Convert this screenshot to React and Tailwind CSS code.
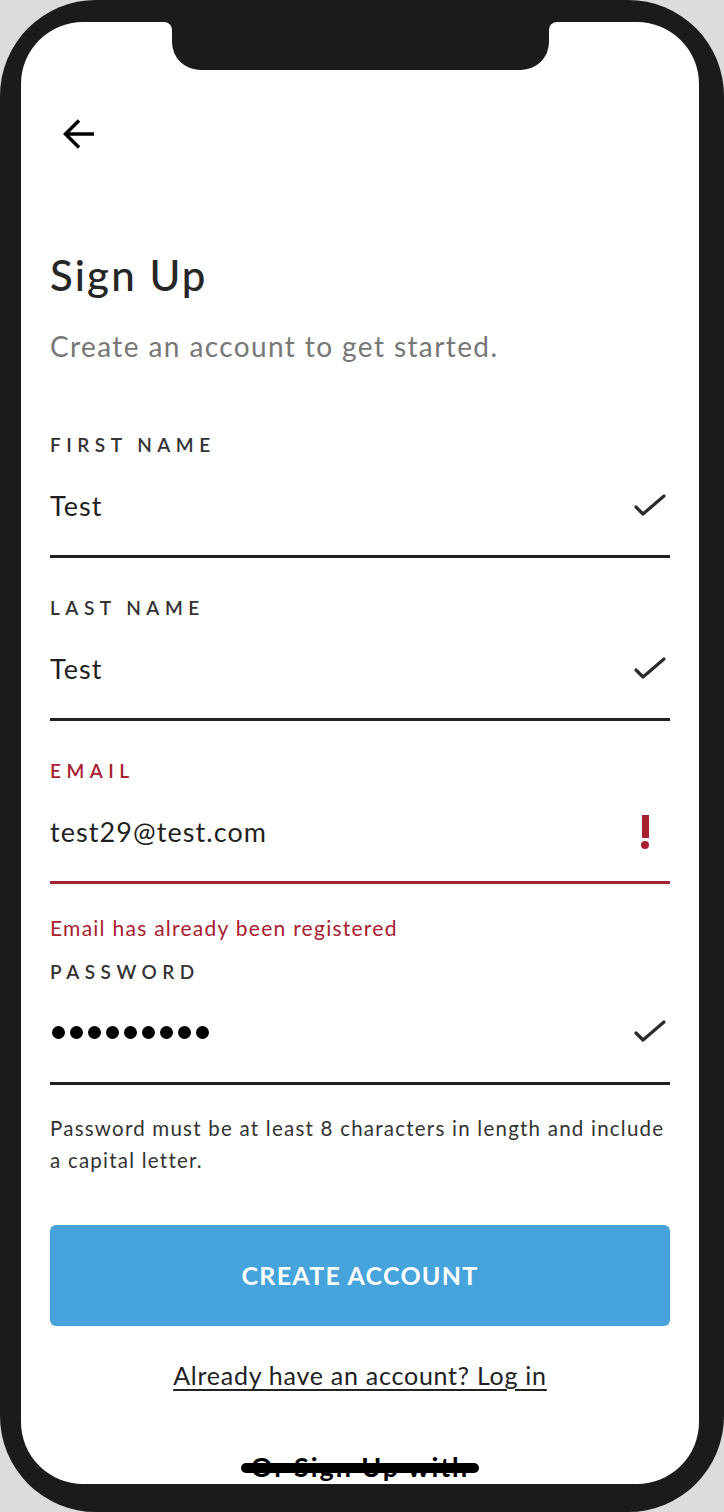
import React from 'react';

const font = { fontFamily: 'Lato, "Noto Sans", sans-serif' };

const Check = () => (
  <svg width="34" height="26" viewBox="0 0 34 26" fill="none">
    <polyline points="3,14 10,21 31,3" stroke="#2b2b2b" strokeWidth="3.2" strokeLinecap="round" strokeLinejoin="round" />
  </svg>
);

const Alert = () => (
  <div className="flex flex-col items-center w-[34px] mr-[5px]">
    <div className="w-[7px] h-[23px] bg-[#a8202f]" />
    <div className="w-[8px] h-[8px] rounded-full bg-[#a8202f] mt-[3px]" />
  </div>
);

const Field = ({ label, value, error, children, rowMt = 'mt-[25px]', lineMt = 'mt-[25px]' }) => (
  <div className="flex flex-col">
    <div className={`h-[24px] leading-[24px] text-[19px] font-semibold tracking-[0.29em] ${error ? 'text-[#a8202f]' : 'text-[#333]'}`}>
      {label}
    </div>
    <div className={`${rowMt} h-[48px] flex items-center justify-between`}>
      {children || <span className="text-[27px] tracking-[0.04em] text-[#1f1f1f]">{value}</span>}
      <div className="mr-[3px]">{error ? <Alert /> : <Check />}</div>
    </div>
    <div className={`${lineMt} h-[3px] ${error ? 'bg-[#a8202f]' : 'bg-[#222]'}`} />
  </div>
);

export default function App() {
  return (
    <div className="w-[724px] h-[1512px] bg-[#dcdcdc] overflow-hidden" style={font}>
      <div className="w-[724px] h-[1512px] bg-[#1b1b1b] rounded-[96px] pt-[22px] pl-[21px] pr-[25px]">
        <div className="relative h-[1462px] bg-white rounded-[62px] overflow-hidden">
          {/* notch */}
          <div className="absolute left-[143px] top-0 w-[8px] h-[8px] bg-[#1b1b1b]">
            <div className="w-full h-full bg-white rounded-tr-[8px]" />
          </div>
          <div className="absolute left-[528px] top-0 w-[8px] h-[8px] bg-[#1b1b1b]">
            <div className="w-full h-full bg-white rounded-tl-[8px]" />
          </div>
          <div className="absolute left-[151px] top-0 w-[377px] h-[48px] bg-[#1b1b1b] rounded-b-[28px]" />

          <div className="px-[29px] pt-[98px] flex flex-col">
            <div className="h-[28px] flex items-center">
              <svg width="34" height="32" viewBox="0 0 34 32" fill="none" className="ml-[13px]">
                <line x1="3" y1="16" x2="31" y2="16" stroke="#000" strokeWidth="3.5" />
                <polyline points="16,2.5 2.5,16 16,29.5" stroke="#000" strokeWidth="3.5" fill="none" strokeLinejoin="miter" />
              </svg>
            </div>

            <h1 className="mt-[103px] h-[48px] leading-[48px] text-[42px] font-medium tracking-[0.05em] text-[#262626]">Sign Up</h1>
            <p className="mt-[31px] leading-[32px] text-[28px] tracking-[0.05em] text-[#777]">Create an account to get started.</p>

            <div className="mt-[71px] flex flex-col gap-[38px]">
              <Field label="FIRST NAME" value="Test" />
              <Field label="LAST NAME" value="Test" />
              <Field label="EMAIL" value="test29@test.com" error />
            </div>

            <p className="mt-[30px] leading-[28px] text-[21px] tracking-[0.06em] text-[#a8202f]">Email has already been registered</p>

            <div className="mt-[18px]">
              <Field label="PASSWORD" rowMt="mt-[24px]" lineMt="mt-[26px]">
                <div className="flex gap-[5px] ml-[2px]">
                  {Array.from({ length: 9 }).map((_, i) => (
                    <div key={i} className="w-[13px] h-[13px] rounded-full bg-black" />
                  ))}
                </div>
              </Field>
            </div>

            <p className="mt-[27px] leading-[32px] text-[20.5px] tracking-[0.06em] text-[#333]">
              Password must be at least 8 characters in length and include a capital letter.
            </p>

            <button className="mt-[49px] h-[101px] rounded-[6px] bg-[#47a3dc] text-white text-[25px] font-bold tracking-[0.05em]">
              CREATE ACCOUNT
            </button>

            <div className="mt-[33px] text-center leading-[32px]">
              <a className="text-[25px] tracking-[0.03em] text-[#222] underline underline-offset-[4px]">Already have an account? Log in</a>
            </div>

            <div className="mt-[57px] flex justify-center">
              <div className="relative">
                <span className="block leading-[30px] text-[27px] font-bold tracking-[0.07em] text-black px-[10px]">Or Sign Up with</span>
                <div className="absolute left-0 right-0 top-[11px] h-[10px] rounded-full bg-black" />
              </div>
            </div>
          </div>
        </div>
      </div>
    </div>
  );
}
